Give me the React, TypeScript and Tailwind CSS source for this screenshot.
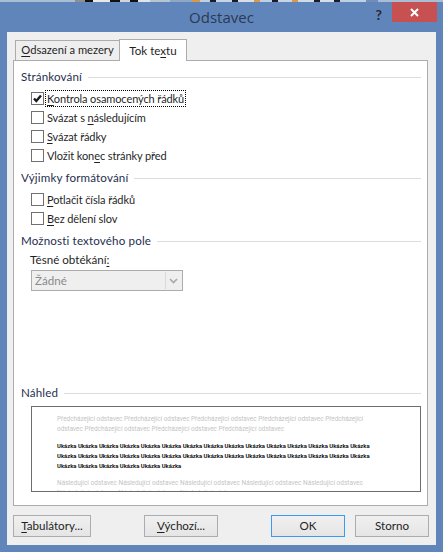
const ui = { fontFamily: 'Lato, "Liberation Sans", sans-serif' };

function Key({ children }: { children: string }) {
  return <span className="underline underline-offset-2 decoration-1">{children}</span>;
}

function Check({ checked, focused, children }: { checked?: boolean; focused?: boolean; children: React.ReactNode }) {
  return (
    <div className="flex h-[19px] items-center">
      <div className="flex h-[13px] w-[13px] shrink-0 items-center justify-center border border-[#707070] bg-white">
        {checked && (
          <svg viewBox="0 0 11 11" className="h-[11px] w-[11px]">
            <path d="M2 5.5 L4.3 8 L9 2.5" fill="none" stroke="#1a1a1a" strokeWidth="2.4" />
          </svg>
        )}
      </div>
      <span className={`ml-[2px] px-px text-[11px] leading-[15px] tracking-[-0.1px] text-[#1f1f1f] ${focused ? 'outline outline-1 outline-dotted outline-black' : ''}`}>
        {children}
      </span>
    </div>
  );
}

function Group({ title, className }: { title: string; className?: string }) {
  return (
    <div className={`flex items-center gap-[6px] text-[#1f2f4f] ${className ?? ''}`}>
      <span className="leading-[16px] tracking-[0.15px]">{title}</span>
      <div className="h-px flex-1 bg-[#dcdcdc]" />
    </div>
  );
}

function Button({ children, primary, className }: { children: React.ReactNode; primary?: boolean; className?: string }) {
  return (
    <div
      className={`flex h-[22px] items-center justify-center bg-gradient-to-b from-[#f0f0f0] to-[#e5e5e5] text-[#1f1f1f] border ${
        primary ? 'border-[#3c9bf0]' : 'border-[#acacac]'
      } ${className ?? ''}`}
    >
      {children}
    </div>
  );
}

// the desktop showing through above the window
const strip: [number, string][] = [
  [75, '#a9bdd4'], [10, '#8b8f96'], [8, '#111111'], [17, '#e8e8e8'], [10, '#111111'], [10, '#cfd6de'], [8, '#111111'],
  [12, '#dfe5ec'], [20, '#b6c4d4'], [22, '#8fa7c6'], [8, '#d89a4a'], [10, '#bcd0e6'], [6, '#1a1a2a'], [16, '#c6d6e8'],
  [6, '#1a1a2a'], [16, '#d6dfe8'], [6, '#d89a4a'], [12, '#bcd0e6'], [6, '#1a1a2a'], [14, '#c6d6e8'], [6, '#d89a4a'],
  [16, '#cfdbe8'], [6, '#1a1a2a'], [14, '#d6dfe8'], [6, '#1a1a2a'], [26, '#bcd0e6'], [12, '#6f8fba'], [65, '#a9bdd4'],
];

const before = Array(8).fill('Předcházející odstavec').join(' ');
const sample = Array(36).fill('Ukázka').join(' ');
const after = Array(8).fill('Následující odstavec').join(' ');

export default function App() {
  return (
    <div className="relative flex h-[552px] w-[443px] flex-col overflow-hidden bg-[#6085bb] text-[11.6px]" style={ui}>
      <div className="flex h-[2px]">
        {strip.map(([w, c], i) => (
          <div key={i} className="h-full shrink-0" style={{ width: w, background: c }} />
        ))}
      </div>
      <div className="relative flex h-[30px] items-center justify-center">
        <span className="font-['Open_Sans'] text-[15px] text-[#2b3a52]">Odstavec</span>
        <span className="absolute right-[61px] top-[2px] text-[14px] font-bold text-[#2a2a2a]">?</span>
        <div className="absolute right-[6px] top-0 flex h-[20px] w-[45px] items-center justify-center bg-[#c75050]">
          <svg viewBox="0 0 9 9" className="h-[9px] w-[9px]">
            <path d="M1 1 L8 8 M8 1 L1 8" stroke="#fff" strokeWidth="2" />
          </svg>
        </div>
      </div>

      <div className="mx-[7px] flex h-[513px] flex-col bg-[#efefef] px-[6px] pt-[7px]">
        <div className="flex h-[21px] items-end pl-[2px]">
          <div className="flex h-[20px] w-[105px] items-center justify-center border border-b-0 border-[#acacac] bg-[#eeeeee] text-[11.2px] text-[#1f1f1f]">
            <span><Key>O</Key>dsazení a mezery</span>
          </div>
          <div className="-mb-px z-10 flex h-[22px] w-[68px] -ml-px items-center justify-center border border-b-0 border-[#acacac] bg-white text-[#1f1f1f]">
            <span>Tok te<Key>x</Key>tu</span>
          </div>
        </div>

        <div className="flex h-[446px] w-[415px] flex-col border border-[#acacac] bg-white pl-[7px] pr-[6px]">
          <Group title="Stránkování" className="mt-[8px]" />
          <div className="mt-[4px] pl-[10px]">
            <Check checked focused><Key>K</Key>ontrola osamocených řádků</Check>
            <Check>Svázat s <Key>n</Key>ásledujícím</Check>
            <Check><Key>S</Key>vázat řádky</Check>
            <Check>Vložit kon<Key>e</Key>c stránky před</Check>
          </div>
          <Group title="Výjimky formátování" className="mt-[5px]" />
          <div className="mt-[4px] pl-[10px]">
            <Check><Key>P</Key>otlačit čísla řádků</Check>
            <Check><Key>B</Key>ez dělení slov</Check>
          </div>
          <Group title="Možnosti textového pole" className="mt-[5px]" />
          <div className="mt-[3px] pl-[9px] leading-[16px] text-[#1f1f1f]">Těsné obtékání<Key>:</Key></div>
          <div className="ml-[10px] mt-[2px] flex h-[21px] w-[152px] border border-[#acacac] bg-[#efefef] text-[#8a8a8a]">
            <span className="flex-1 pl-[3px] leading-[19px]">Žádné</span>
            <div className="m-px flex w-[16px] items-center justify-center border-l border-[#d9d9d9]">
              <svg viewBox="0 0 9 6" className="h-[6px] w-[9px]">
                <path d="M1 1 L4.5 4.5 L8 1" fill="none" stroke="#a8a8a8" strokeWidth="1.6" />
              </svg>
            </div>
          </div>

          <Group title="Náhled" className="mt-[94px]" />
          <div className="ml-[10px] mt-[5px] h-[86px] overflow-hidden border border-[#6d6d6d] bg-white pl-[25px] pr-[48px] pt-[7px] font-['Roboto'] text-[6.4px] leading-[10px]">
            <div className="text-[#c4c4c4]">{before}</div>
            <div className="mt-[7px] text-[5.9px] font-bold text-[#111111]">{sample}</div>
            <div className="mt-[7px] text-[6.5px] text-[#c4c4c4]">{after}</div>
          </div>
        </div>

        <div className="mt-[9px] flex">
          <Button className="w-[78px]"><span><Key>T</Key>abulátory...</span></Button>
          <Button className="ml-[53px] w-[74px]"><span><Key>V</Key>ýchozí...</span></Button>
          <Button primary className="ml-[53px] w-[74px]">OK</Button>
          <Button className="ml-[10px] w-[74px]">Storno</Button>
        </div>
      </div>
    </div>
  );
}
